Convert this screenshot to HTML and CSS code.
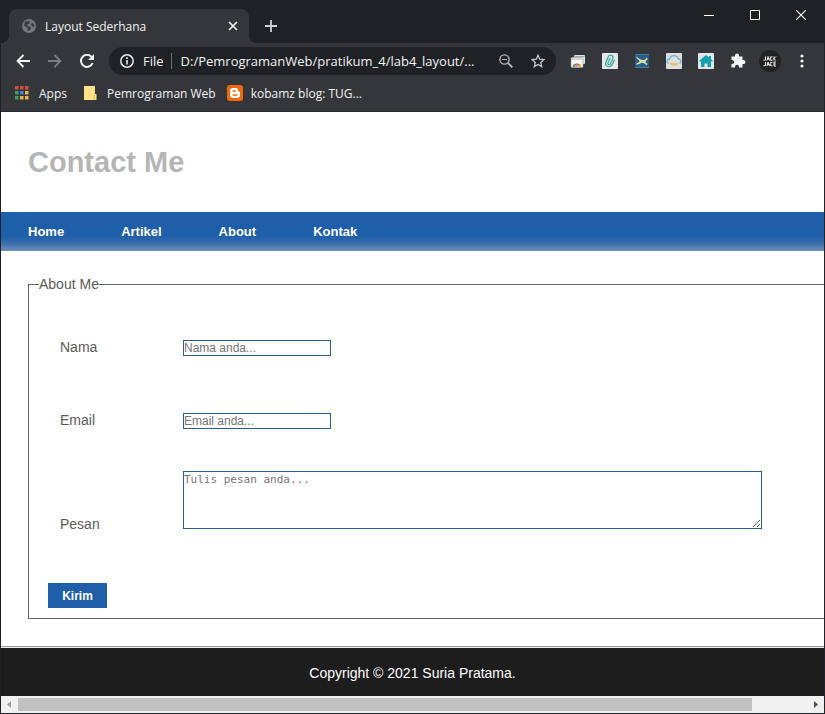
FILE: index.html
```html
<!DOCTYPE html>
<html lang="id">
<head>
<meta charset="utf-8">
<meta name="viewport" content="width=device-width, initial-scale=1">
<title>Layout Sederhana</title>
<link rel="stylesheet" href="styles.css">
</head>
<body>
<div class="window">
  <div class="tabstrip">
    <div class="tab">
      <svg class="favicon" viewBox="0 0 14 14"><circle cx="7" cy="7" r="7" fill="#74777b"/><path d="M3 2.500 7.500 2 8 4 5.500 5.500 5 7 8 7.500 9 9.500 7 12 5.500 11.500 5.500 9 2 6.500zM10 3.500 12.500 6 11.500 8.500 9 6z" fill="#3c3e42"/></svg>
      <span class="tab-title">Layout Sederhana</span>
      <button class="icon-button tab-close" aria-label="Close tab"><svg width="10" height="10" viewBox="0 0 10 10"><path d="M1 1l8 8M9 1l-8 8" stroke="#f1f3f4" stroke-width="1.700"/></svg></button>
    </div>
    <button class="icon-button new-tab" aria-label="New tab"><svg width="12" height="12" viewBox="0 0 12 12"><path d="M6 0v12M0 6h12" stroke="#d0d3d6" stroke-width="1.800"/></svg></button>
    <div class="window-controls">
      <button class="icon-button" aria-label="Minimize"><svg width="10" height="10" viewBox="0 0 10 10"><path d="M0 5.500h10" stroke="#fff"/></svg></button>
      <button class="icon-button" aria-label="Maximize"><svg width="10" height="10" viewBox="0 0 10 10"><path d="M.5.5h9v9h-9z" fill="none" stroke="#fff"/></svg></button>
      <button class="icon-button" aria-label="Close"><svg width="10" height="10" viewBox="0 0 10 10"><path d="M0 0l10 10M10 0L0 10" stroke="#fff" stroke-width="1.100"/></svg></button>
    </div>
  </div>

  <div class="toolbar">
    <button class="icon-button tool" aria-label="Back"><svg width="14" height="14" viewBox="0 0 14 14"><path d="M14 7H1.500M7.500 1l-6 6 6 6" fill="none" stroke="#f1f3f4" stroke-width="1.800"/></svg></button>
    <button class="icon-button tool" aria-label="Forward"><svg width="14" height="14" viewBox="0 0 14 14"><path d="M0 7h12.500M6.500 1l6 6-6 6" fill="none" stroke="#7c7e82" stroke-width="1.800"/></svg></button>
    <button class="icon-button tool" aria-label="Reload"><svg width="14" height="14" viewBox="0 0 14 14"><path d="M12.600 9A6 6 0 1 1 11.500 2.900" fill="none" stroke="#f1f3f4" stroke-width="2"/><path d="M14 0v6H8z" fill="#f1f3f4"/></svg></button>
    <div class="omnibox">
      <svg class="info" width="14" height="14" viewBox="0 0 14 14"><circle cx="7" cy="7" r="6.200" fill="none" stroke="#e8eaed" stroke-width="1.500"/><path d="M7 6v4.500M7 3.300v1.600" stroke="#e8eaed" stroke-width="1.600"/></svg>
      <label class="scheme" for="address">File</label>
      <input class="address" id="address" type="text" value="D:/PemrogramanWeb/pratikum_4/lab4_layout/...">
      <button class="icon-button tool" aria-label="Zoom"><svg width="14" height="14" viewBox="0 0 14 14"><circle cx="5.500" cy="5.500" r="4.600" fill="none" stroke="#b5b8bc" stroke-width="1.400"/><path d="M3 5.500h5" stroke="#b5b8bc"/><path d="M8.800 8.800l4.600 4.600" stroke="#b5b8bc" stroke-width="1.900"/></svg></button>
      <button class="icon-button tool" aria-label="Bookmark this page"><svg width="14" height="14" viewBox="0 0 14 14"><path d="M7 1.300l1.700 3.900 4.200.4-3.200 2.800 1 4.200L7 10.400l-3.700 2.200 1-4.200L1.100 5.600l4.200-.4z" fill="none" stroke="#c6c9cc" stroke-width="1.300"/></svg></button>
    </div>
    <button class="icon-button tool" aria-label="Web store"><svg width="16" height="16" viewBox="0 0 16 16"><rect x="4" y="2" width="11" height="9" rx="1" fill="#e3e6e4"/><path d="M4.500 3.500h10" stroke="#9aaba5"/><rect x="1" y="4.500" width="12" height="10" rx="1" fill="#f8f8f7" stroke="#8f9694" stroke-width=".6"/><path d="M1.500 6h11" stroke="#b4bbb9"/><path d="M2.800 13.800a4.300 4.300 0 0 1 8.400 0z" fill="#dc4437"/><path d="M2.800 13.800c0-1.200.4-2 1-2.600l2.200 2.600z" fill="#38985c"/><path d="M8.500 13.800l.8-2.300h1.300c.5.700.7 1.500.6 2.300z" fill="#edbd38"/><path d="M5.200 13.800a1.800 1.800 0 0 1 3.600 0z" fill="#3979cb" stroke="#fff" stroke-width=".6"/></svg></button>
    <button class="icon-button tool" aria-label="Paper clip"><svg width="16" height="16" viewBox="0 0 16 16"><rect width="16" height="16" rx="1" fill="#e7e9e9"/><g transform="rotate(24 8 8)" fill="none" stroke="#32a695" stroke-width="1.200" stroke-linecap="round"><path d="M11.500 5.500v5a3.400 3.400 0 0 1-6.800 0V4.500a2.400 2.400 0 0 1 4.800 0v6a1.300 1.300 0 0 1-2.600 0V5.500"/></g></svg></button>
    <button class="icon-button tool" aria-label="Runner"><svg width="16" height="16" viewBox="0 0 16 16"><path d="M1 1h14v14H1z" fill="#275d86"/><path d="M1 1.500h14M1 14.500h14" stroke="#477da3"/><path d="M1.500 3l3.500 2.500 2 1.300 3.500.2L12.500 5l1.500.8-1.500 1.400-1.300 2 2.300 1.600-.5 1.400-3.500-2.200-2-.3-2.500 1.500-3 .3.300-1 2.700-1.200.6-1.300L3 5.500z" fill="#e2dda4"/></svg></button>
    <button class="icon-button tool" aria-label="Cloud"><svg width="16" height="16" viewBox="0 0 16 16"><rect width="16" height="16" rx="1" fill="#dedfdf"/><path d="M2.500 10.500C0 9 1 6 3.500 6 4.500 1.500 11 1.500 12.500 6c2.500 0 3.500 3 1 4.500" fill="none" stroke="#74afd4" stroke-width="1.300"/><path d="M3.500 9c1.500 1.800 7.500 1.800 9 0-.3 5-8.700 5-9 0z" fill="#e8bd68"/></svg></button>
    <button class="icon-button tool" aria-label="Home"><svg width="16" height="16" viewBox="0 0 16 16"><rect width="16" height="16" rx="1" fill="#e2e6e7"/><path d="M1.500 7.500L8 2l3 2.500V3h2v3l1.500 1.500v1H13V14H9.500v-3.500h-3V14H3V8.500H1.500z" fill="#149eae"/></svg></button>
    <button class="icon-button tool" aria-label="Extensions"><svg width="16" height="16" viewBox="0 0 16 16"><path d="M1.500 3.500H5c-.7-4 4.700-4 4 0h3.500V7c4-.700 4 4.600 0 4v3.500H9c.4-3.600-4.300-3.600-4 0H1.500V11c3.600.4 3.600-4.400 0-4z" fill="#f1f3f4"/></svg></button>
    <button class="icon-button tool" aria-label="Profile"><svg width="22" height="22" viewBox="0 0 22 22"><circle cx="11" cy="11" r="11" fill="#222223"/><g fill="none" stroke="#f1f1f1" stroke-width="1"><path d="M6.500 6.500v3.500l-2 .2M8 10.500l1-4 1.500 4M8.500 9h2M13.500 6.800h-1.800v3.500h1.800M15 6.500v4M17 6.500L15 8.500l1.500 1.800M6.500 12v3.500l-2 .2M8 16l1-4 1.500 4M8.500 14.500h2M13.500 12.300h-1.800v3.500h1.800M17 12h-2v4h2M15 14h1.800"/></g></svg></button>
    <button class="icon-button tool" aria-label="Menu"><svg width="4" height="14" viewBox="0 0 4 14"><g fill="#f1f3f4"><circle cx="2" cy="2" r="1.600"/><circle cx="2" cy="7" r="1.600"/><circle cx="2" cy="12" r="1.600"/></g></svg></button>
  </div>

  <div class="bookmarks">
    <a class="bookmark apps" href="#"><svg width="14" height="14" viewBox="0 0 14 14"><path d="M0 0h3.500v3.500H0zM5 0h3.500v3.500H5zM10 0h3.500v3.500H10z" fill="#db4a42"/><path d="M0 5h3.500v3.500H0zM0 10h3.500v3.500H0z" fill="#35a069"/><path d="M5 5h3.500v3.500H5z" fill="#3c82df"/><path d="M10 5h3.500v3.500H10zM5 10h3.500v3.500H5zM10 10h3.500v3.500H10z" fill="#e4b842"/></svg>Apps</a>
    <a class="bookmark folder" href="#"><svg width="13" height="14" viewBox="0 0 13 14"><path d="M0 0h11v8h1.500v6H0z" fill="#ffe38a"/><path d="M9.500 14V9.500L11 8v6z" fill="#e9c658"/></svg>Pemrograman Web</a>
    <a class="bookmark" href="#"><svg width="16" height="16" viewBox="0 0 16 16"><rect width="16" height="16" rx="3" fill="#f2690d"/><path d="M6 3h2.800C10.500 3 11.300 4.200 11.300 6c0 .6.300.8.900.8.600 0 .8.400.8 1v2.500c0 1.800-1.200 2.700-2.700 2.700H6c-1.800 0-3-1.200-3-3V6c0-1.800 1.200-3 3-3z" fill="#fff"/><path d="M6 6h2.300M6 10h4" stroke="#f2690d" stroke-width="1.300" stroke-linecap="round"/></svg>kobamz blog: TUG...</a>
  </div>

  <div class="page">
    <header class="page-header"><h1>Contact Me</h1></header>
    <nav class="menu">
      <a href="#">Home</a>
      <a href="#">Artikel</a>
      <a href="#">About</a>
      <a href="#">Kontak</a>
    </nav>
    <main class="content">
      <form>
        <fieldset>
          <legend>About Me</legend>
          <div class="row"><label for="nama">Nama</label><input id="nama" type="text" placeholder="Nama anda..."></div>
          <div class="row"><label for="email">Email</label><input id="email" type="text" placeholder="Email anda..."></div>
          <div class="row message"><label for="pesan">Pesan</label><textarea id="pesan" placeholder="Tulis pesan anda..."></textarea></div>
          <button class="submit" type="button">Kirim</button>
        </fieldset>
      </form>
    </main>
    <footer class="page-footer">Copyright © 2021 Suria Pratama.</footer>
  </div>

  <div class="scrollbar">
    <svg width="17" height="17" viewBox="0 0 17 17"><path d="M10 5v7L6 8.500z" fill="#a3a3a3"/></svg>
    <div class="track"><div class="thumb"></div></div>
    <svg width="17" height="17" viewBox="0 0 17 17"><path d="M7 5v7l4-3.500z" fill="#505050"/></svg>
  </div>
</div>
</body>
</html>
```

FILE: styles.css
```css
* {
  box-sizing: border-box;
}

body {
  margin: 0;
  font-family: "Liberation Sans", Arial, sans-serif;
}

.window {
  display: flex;
  flex-direction: column;
  min-height: 100vh;
  border: 1px solid #202124;
  border-top: 0;
  background: #35363a;
  overflow: hidden;
}

.tabstrip,
.toolbar,
.bookmarks {
  display: flex;
  color: #f1f3f4;
  font-family: "Open Sans", "Noto Sans", sans-serif;
  font-size: 12px;
}

.icon-button {
  display: flex;
  align-items: center;
  justify-content: center;
  flex: none;
  padding: 0;
  border: 0;
  background: none;
}

/* Tabs and window controls */
.tabstrip {
  height: 43px;
  padding-left: 8px;
  background: #202124;
}

.tab {
  position: relative;
  display: flex;
  align-items: center;
  width: 240px;
  margin-top: 9px;
  padding: 0 8px 0 13px;
  border-radius: 8px 8px 0 0;
  background: #35363a;
}

.tab::before,
.tab::after {
  content: "";
  position: absolute;
  bottom: 0;
  width: 8px;
  height: 8px;
}

.tab::before {
  right: 100%;
  background: radial-gradient(circle at 0 0, #202124 8px, #35363a 8px);
}

.tab::after {
  left: 100%;
  background: radial-gradient(circle at 100% 0, #202124 8px, #35363a 8px);
}

.favicon {
  width: 14px;
  height: 14px;
  margin-right: 9px;
}

.tab-title {
  flex: 1;
  white-space: nowrap;
}

.tab-close {
  width: 16px;
  height: 16px;
}

.new-tab {
  width: 28px;
  height: 28px;
  margin: 12px 0 0 8px;
}

.window-controls {
  display: flex;
  margin-left: auto;
}

.window-controls .icon-button {
  width: 46px;
  height: 30px;
}

/* Toolbar */
.toolbar {
  align-items: center;
  height: 36px;
  padding: 0 6px;
}

.tool {
  width: 32px;
  height: 28px;
}

.omnibox {
  display: flex;
  flex: 1;
  align-items: center;
  min-width: 0;
  height: 28px;
  margin: 0 6px;
  padding: 0 2px 0 11px;
  border-radius: 14px;
  background: #202124;
  font-size: 13px;
}

.info {
  flex: none;
  margin-right: 9px;
}

.scheme {
  padding-right: 7px;
  border-right: 1px solid #6c6e72;
  line-height: 16px;
}

.address {
  flex: 1;
  min-width: 0;
  height: 24px;
  padding: 0 0 0 9px;
  border: 0;
  outline: 0;
  background: none;
  color: #f1f3f4;
  font: inherit;
}

/* Bookmarks */
.bookmarks {
  align-items: center;
  gap: 11px;
  height: 33px;
  padding: 0 14px 4px;
  border-bottom: 1px solid #28292c;
}

.bookmark {
  display: flex;
  align-items: center;
  gap: 8px;
  color: inherit;
  text-decoration: none;
  white-space: nowrap;
}

.bookmark.apps,
.bookmark.folder {
  gap: 10px;
}

.bookmark.apps {
  margin-right: 6px;
}

/* Page */
.page {
  display: flex;
  flex: 1;
  flex-direction: column;
  background: #fff;
  color: #5a5a5a;
  font-size: 14px;
  line-height: 16px;
}

.page-header {
  padding: 32px 27px;
}

h1 {
  margin: 0;
  color: #b5b5b5;
  font-size: 29px;
  line-height: 36px;
}

.menu {
  display: flex;
  gap: 57px;
  padding: 0 27px;
  background: #1f5faa;
  box-shadow: inset 0 -16px 12px -12px #8c9fb8;
}

.menu a {
  color: #fff;
  font-size: 13px;
  font-weight: bold;
  line-height: 39px;
  text-decoration: none;
}

.content {
  flex: 1;
  padding: 26px 0 27px 27px;
}

fieldset {
  min-width: 0;
  margin: 0;
  padding: 19px 62px 10px 19px;
  border: 1px solid #666;
  border-right: 0;
}

legend {
  margin-left: -9px;
  padding: 0;
  line-height: 15px;
}

.row {
  display: grid;
  grid-template-columns: 123px 1fr;
  align-items: center;
  min-height: 73px;
  padding-left: 12px;
}

.row label {
  padding-bottom: 2px;
}

.row input,
.row textarea {
  display: block;
  margin: 0;
  padding: 1px 0;
  border: 1px solid #2b5f90;
  border-radius: 0;
  background: #fff;
}

.row input {
  width: 148px;
  height: 16px;
  font: 12px "Liberation Sans", Arial, sans-serif;
}

.row textarea {
  width: 100%;
  height: 58px;
  margin-bottom: 5px;
  font: 11px/13px "DejaVu Sans Mono", monospace;
}

.row ::placeholder {
  color: #757575;
}

.message {
  align-items: end;
  padding-top: 14px;
  padding-bottom: 49px;
}

.submit {
  display: block;
  width: 59px;
  height: 25px;
  padding: 0;
  border: 0;
  background: #1f5faa;
  color: #fff;
  font: bold 12px "Liberation Sans", Arial, sans-serif;
}

.page-footer {
  padding: 18px 16px 14px;
  border-top: 1px solid #999;
  box-shadow: inset 0 1px #eee;
  background: #1d1d1d;
  color: #fff;
  line-height: 17px;
  text-align: center;
}

/* Horizontal scrollbar */
.scrollbar {
  display: flex;
  height: 17px;
  background: #f1f1f1;
}

.track {
  flex: 1;
  padding: 2px 0;
}

.thumb {
  width: 93%;
  height: 13px;
  background: #c1c1c1;
}
```
